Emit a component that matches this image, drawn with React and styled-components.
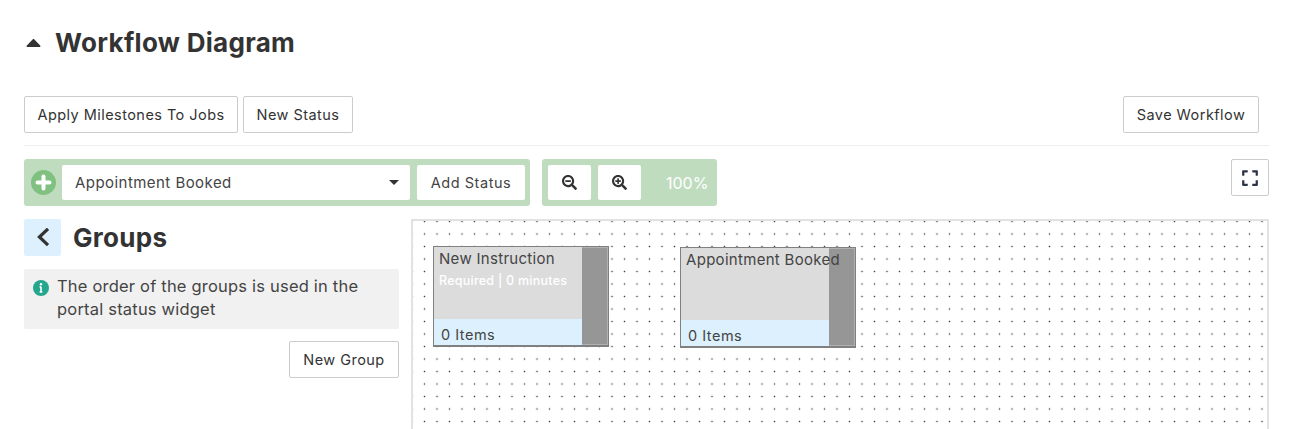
import React from "react";
import styled, { createGlobalStyle } from "styled-components";
import { FaCaretUp, FaExpand, FaSearchMinus, FaSearchPlus } from "react-icons/fa";

const Global = createGlobalStyle`
  html, body { margin: 0; padding: 0; background: #fff; }
  body { font-family: Inter, "Open Sans", sans-serif; color: #333; overflow: hidden; }
  * { box-sizing: border-box; }
`;

const Page = styled.div`
  width: 1294px;
  height: 429px;
  overflow: hidden;
  padding: 24px 25px 0 24px;
`;

const Heading = styled.div`
  display: flex;
  align-items: center;
  gap: 14px;
  height: 36px;
  padding-left: 2px;
  color: #333;
`;

const Caret = styled(FaCaretUp)`
  width: 15px;
  height: 27px;
`;

const Title = styled.h1`
  margin: 0;
  font-size: 26px;
  font-weight: 700;
  letter-spacing: 0.3px;
  color: #333;
`;

const TopBar = styled.div`
  display: flex;
  gap: 5px;
  margin-top: 36px;
  padding: 0 10px 12px 0;
  border-bottom: 1px solid #eee;
`;

const Spacer = styled.div`
  flex: 1;
`;

const Button = styled.button`
  height: 37px;
  width: ${(p) => p.$w}px;
  padding: 0 0 1px;
  border: 1px solid #ccc;
  border-radius: 2px;
  background: #fff;
  color: #333;
  font-family: inherit;
  font-size: 14.5px;
  letter-spacing: 0.45px;
`;

const ToolRow = styled.div`
  display: flex;
  align-items: flex-start;
  gap: 12px;
  margin-top: 13px;
`;

const GreenBar = styled.div`
  display: flex;
  align-items: center;
  gap: 7px;
  height: 47px;
  padding: 0 5px 0 ${(p) => p.$left}px;
  background: #bfdcbf;
  border-radius: 3px;
`;

const PlusBadge = styled.span`
  display: flex;
  width: 25px;
  height: 25px;
  margin-right: -1px;
`;

const Select = styled.div`
  display: flex;
  align-items: center;
  justify-content: space-between;
  width: 348px;
  height: 35px;
  padding: 0 11px 0 13px;
  background: #fff;
  border-radius: 2px;
  font-size: 15px;
  letter-spacing: 0.45px;
  color: #444;
`;

const SelectCaret = styled.span`
  width: 0;
  height: 0;
  border-left: 5px solid transparent;
  border-right: 5px solid transparent;
  border-top: 5px solid #333;
`;

const BarButton = styled.button`
  display: flex;
  align-items: center;
  justify-content: center;
  width: ${(p) => p.$w}px;
  height: 35px;
  padding: 0;
  border: 0;
  border-radius: 2px;
  background: #fff;
  color: #444;
  font-family: inherit;
  font-size: 14.5px;
  letter-spacing: 0.55px;
`;

const Percent = styled.span`
  width: 64px;
  padding-left: 18px;
  color: #fff;
  font-size: 16px;
`;

const FullscreenButton = styled(Button)`
  display: flex;
  align-items: center;
  justify-content: center;
  padding: 0;
  margin-left: auto;
  color: #2b3345;
`;

const Content = styled.div`
  display: flex;
  gap: 12px;
  margin-top: 13px;
`;

const Sidebar = styled.div`
  display: flex;
  flex-direction: column;
  width: 375px;
  flex-shrink: 0;
`;

const GroupsHead = styled.div`
  display: flex;
  align-items: center;
  gap: 12px;
`;

const BackButton = styled.span`
  display: flex;
  align-items: center;
  justify-content: center;
  width: 37px;
  height: 37px;
  border-radius: 2px;
  background: #dcf1fd;
`;

const InfoBox = styled.div`
  display: flex;
  gap: 8px;
  margin-top: 13px;
  padding: 6px 10px 8px 9px;
  background: #f1f1f1;
  border-radius: 2px;
  font-size: 16.5px;
  letter-spacing: 0.2px;
  line-height: 23px;
  color: #444;
`;

const InfoIcon = styled.svg`
  flex-shrink: 0;
  width: 16px;
  height: 16px;
  margin-top: 5px;
`;

const GroupActions = styled.div`
  display: flex;
  justify-content: flex-end;
  margin-top: 12px;
`;

const Canvas = styled.div`
  position: relative;
  flex: 1;
  height: 240px;
  border: 2px solid #e2e2e2;
  border-bottom: 0;
  background-color: #fff;
  background-image: radial-gradient(circle at center, #444 0.7px, transparent 1.05px);
  background-size: 12.5px 12.5px;
  background-position: 5.25px -5.75px;
`;

const Node = styled.div`
  position: absolute;
  left: ${(p) => p.$x}px;
  top: ${(p) => p.$y}px;
  width: 176px;
  height: 101px;
  display: grid;
  grid-template-columns: 1fr 26px;
  border: 1px solid #808080;
  border-bottom-width: 2px;
  background: #dcdcdc;
`;

const NodeBody = styled.div`
  position: relative;
  z-index: 1;
  display: flex;
  flex-direction: column;
  min-width: 0;
`;

const NodeText = styled.div`
  flex: 1;
  padding: 2px 0 0 5px;
`;

const NodeName = styled.div`
  font-size: 15px;
  letter-spacing: 0.3px;
  line-height: 20px;
  color: #444;
  white-space: nowrap;
`;

const NodeMeta = styled.div`
  margin-top: 3px;
  font-size: 12.5px;
  font-weight: 500;
  letter-spacing: 0.25px;
  line-height: 17px;
  color: #fff;
  white-space: nowrap;
`;

const NodeFoot = styled.div`
  height: 26px;
  padding: 6px 0 0 7px;
  background: #dcf1fd;
  font-size: 14.5px;
  letter-spacing: 0.5px;
  line-height: 20px;
  color: #444;
`;

const NodeHandle = styled.div`
  background: #969696;
  border: 1px solid #b0b0b0;
  border-left: 0;
`;

const nodes = [
  { name: "New Instruction", meta: "Required | 0 minutes", x: 20, y: 25 },
  { name: "Appointment Booked", x: 267, y: 26 },
];

export default function App() {
  return (
    <Page>
      <Global />
      <Heading>
        <Caret />
        <Title>Workflow Diagram</Title>
      </Heading>
      <TopBar>
        <Button $w={214}>Apply Milestones To Jobs</Button>
        <Button $w={110}>New Status</Button>
        <Spacer />
        <Button $w={136}>Save Workflow</Button>
      </TopBar>
      <ToolRow>
        <GreenBar $left={7}>
          <PlusBadge>
            <svg width="25" height="25" viewBox="0 0 25 25">
              <circle cx="12.5" cy="12.5" r="12.5" fill="#80c080" />
              <path d="M12.5 6.5v12M6.5 12.5h12" stroke="#fff" strokeWidth="4" strokeLinecap="round" />
            </svg>
          </PlusBadge>
          <Select>
            Appointment Booked
            <SelectCaret />
          </Select>
          <BarButton $w={108}>Add Status</BarButton>
        </GreenBar>
        <GreenBar $left={6}>
          <BarButton $w={43}><FaSearchMinus size={15} color="#333" /></BarButton>
          <BarButton $w={43}><FaSearchPlus size={15} color="#333" /></BarButton>
          <Percent>100%</Percent>
        </GreenBar>
        <FullscreenButton $w={38}>
          <FaExpand size={18} />
        </FullscreenButton>
      </ToolRow>
      <Content>
        <Sidebar>
          <GroupsHead>
            <BackButton>
              <svg width="16" height="20" viewBox="0 0 16 20" fill="none" stroke="#333" strokeWidth="3.2">
                <path d="M13 0.8L4.4 9l8.6 8.2" />
              </svg>
            </BackButton>
            <Title>Groups</Title>
          </GroupsHead>
          <InfoBox>
            <InfoIcon viewBox="0 0 16 16">
              <circle cx="8" cy="8" r="8" fill="#26a68f" />
              <path d="M8 6.8v5M6.6 12h2.8M6.6 6.9H8" stroke="#fff" strokeWidth="1.6" fill="none" />
              <circle cx="8" cy="4.2" r="1.2" fill="#fff" />
            </InfoIcon>
            <span>The order of the groups is used in the portal status widget</span>
          </InfoBox>
          <GroupActions>
            <Button $w={110}>New Group</Button>
          </GroupActions>
        </Sidebar>
        <Canvas>
          {nodes.map((n) => (
            <Node key={n.name} $x={n.x} $y={n.y}>
              <NodeBody>
                <NodeText>
                  <NodeName>{n.name}</NodeName>
                  {n.meta && <NodeMeta>{n.meta}</NodeMeta>}
                </NodeText>
                <NodeFoot>0 Items</NodeFoot>
              </NodeBody>
              <NodeHandle />
            </Node>
          ))}
        </Canvas>
      </Content>
    </Page>
  );
}
